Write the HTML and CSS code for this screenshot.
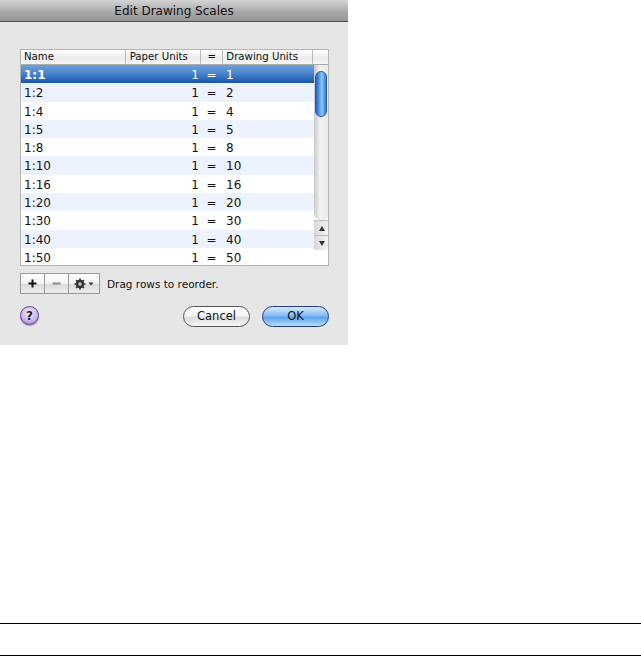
FILE: index.html
```html
<!DOCTYPE html>
<html lang="en">
<head>
<meta charset="utf-8">
<title>Edit Drawing Scales</title>
<link rel="stylesheet" href="styles.css">
</head>
<body>
<div class="dialog">
  <div class="titlebar">Edit Drawing Scales</div>
  <div class="content">
    <div class="table">
      <div class="thead">
        <div class="th c-name">Name</div>
        <div class="th c-paper">Paper Units</div>
        <div class="th c-eq">=</div>
        <div class="th c-draw">Drawing Units</div>
        <div class="th c-end"></div>
      </div>
      <div class="tbody">
        <div class="rows">
          <div class="row selected"><span class="c-name">1:1</span><span class="c-paper num">1</span><span class="c-eq">=</span><span class="c-draw">1</span></div>
          <div class="row alt"><span class="c-name">1:2</span><span class="c-paper num">1</span><span class="c-eq">=</span><span class="c-draw">2</span></div>
          <div class="row"><span class="c-name">1:4</span><span class="c-paper num">1</span><span class="c-eq">=</span><span class="c-draw">4</span></div>
          <div class="row alt"><span class="c-name">1:5</span><span class="c-paper num">1</span><span class="c-eq">=</span><span class="c-draw">5</span></div>
          <div class="row"><span class="c-name">1:8</span><span class="c-paper num">1</span><span class="c-eq">=</span><span class="c-draw">8</span></div>
          <div class="row alt"><span class="c-name">1:10</span><span class="c-paper num">1</span><span class="c-eq">=</span><span class="c-draw">10</span></div>
          <div class="row"><span class="c-name">1:16</span><span class="c-paper num">1</span><span class="c-eq">=</span><span class="c-draw">16</span></div>
          <div class="row alt"><span class="c-name">1:20</span><span class="c-paper num">1</span><span class="c-eq">=</span><span class="c-draw">20</span></div>
          <div class="row"><span class="c-name">1:30</span><span class="c-paper num">1</span><span class="c-eq">=</span><span class="c-draw">30</span></div>
          <div class="row alt"><span class="c-name">1:40</span><span class="c-paper num">1</span><span class="c-eq">=</span><span class="c-draw">40</span></div>
          <div class="row"><span class="c-name">1:50</span><span class="c-paper num">1</span><span class="c-eq">=</span><span class="c-draw">50</span></div>
        </div>
        <div class="scrollbar">
          <div class="track"><div class="thumb"></div></div>
          <div class="arrow"><svg width="8" height="7" viewBox="0 0 8 7"><path d="M4 1 L7 6 H1 Z" fill="#333"/></svg></div>
          <div class="arrow"><svg width="8" height="7" viewBox="0 0 8 7"><path d="M1 1 H7 L4 6 Z" fill="#333"/></svg></div>
        </div>
      </div>
    </div>
    <div class="toolbar">
      <div class="seg">
        <div class="seg-btn plus"><svg width="11" height="11" viewBox="0 0 11 11"><path d="M5.5 1.5 V9.5 M1.5 5.5 H9.5" stroke="#111" stroke-width="2"/></svg></div>
        <div class="seg-btn minus"><svg width="11" height="11" viewBox="0 0 11 11"><path d="M1.5 5.5 H9.5" stroke="#8a8a8a" stroke-width="2"/></svg></div>
        <div class="seg-btn gear">
          <svg width="12" height="12" viewBox="0 0 12 12"><circle cx="6" cy="6" r="3" fill="none" stroke="#333" stroke-width="2.4"/><path d="M6 .5 V11.5 M.5 6 H11.5 M2.1 2.1 L9.9 9.9 M9.9 2.1 L2.1 9.9" stroke="#333" stroke-width="1.7"/><circle cx="6" cy="6" r="1.7" fill="#cfcfcf"/></svg>
          <svg width="6" height="4" viewBox="0 0 6 4"><path d="M.5 .5 H5.5 L3 3.5 Z" fill="#333"/></svg>
        </div>
      </div>
      <span class="hint">Drag rows to reorder.</span>
    </div>
    <div class="actions">
      <div class="help">?</div>
      <div class="buttons">
        <div class="btn">Cancel</div>
        <div class="btn primary">OK</div>
      </div>
    </div>
  </div>
</div>
<div class="rule first"></div>
<div class="rule second"></div>
</body>
</html>
```
FILE: styles.css
```css
* { box-sizing: border-box; }
html, body { margin: 0; padding: 0; background: #fff; }
body { width: 641px; height: 656px; overflow: hidden; font-family: "DejaVu Sans", sans-serif; color: #111; }
.dialog { width: 348px; height: 345px; background: #e6e6e6; }
.titlebar {
  height: 22px; line-height: 22px; text-align: center; font-size: 12px; color: #111;
  background: linear-gradient(#d4d4d4, #a6a6a6 60%, #979797);
  border-bottom: 1px solid #4f4f4f;
}
.content { padding: 27px 19px 0 20px; }
.table { height: 217px; background: #fff; border: 1px solid #b5b5b5; overflow: hidden; }
.thead { display: flex; height: 15px; background: linear-gradient(#fff, #ececec 55%, #f6f6f6); border-bottom: 1px solid #a9a9a9; font-size: 10.2px; }
.th { line-height: 13px; padding-left: 3px; border-right: 1px solid #b9b9b9; color: #111; }
.th.c-paper { padding-left: 4px; }
.c-name { width: 105px; }
.c-paper { width: 76px; }
.c-eq { width: 22px; text-align: center; padding-left: 0; }
.c-draw { width: 90px; }
.c-end { width: 15px; border-right: 0; }
.tbody { display: flex; align-items: flex-start; }
.rows { width: 293px; flex: none; }
.row { display: flex; height: 18.3px; padding-top: 1px; line-height: 18px; font-size: 12px; background: #fff; }
.row .c-name { padding-left: 3px; }
.row .c-eq { padding-right: 3px; }
.row .c-draw { padding-left: 2px; }
.row.alt { background: #edf3fe; }
.row.selected { background: linear-gradient(#6ea0dc, #4a86cf 45%, #1655ab); color: #fff; font-weight: bold; }
.row.selected .num, .row.selected .c-eq, .row.selected .c-draw { font-weight: normal; }
.num { text-align: right; padding-right: 3px; }
.scrollbar { width: 15px; flex: none; display: flex; flex-direction: column; }
.track { height: 155px; padding: 6px 1px 0 1px; background: linear-gradient(90deg, #c8c8c8, #f2f2f2 40%, #e8e8e8); border-radius: 0 0 7px 7px; }
.thumb {
  width: 12px; height: 46px; border-radius: 6px; border: 1px solid #2a5da8;
  background: linear-gradient(90deg, #1f63c4, #6db0f0 45%, #8ec6f8 60%, #2f78d4);
}
.arrow { height: 15px; display: flex; align-items: center; justify-content: center; background: linear-gradient(90deg, #d8d8d8, #f5f5f5); border-top: 1px solid #bdbdbd; }
.toolbar { display: flex; align-items: center; margin-top: 7px; }
.seg { display: flex; height: 21px; width: 80px; border: 1px solid #9a9a9a; background: linear-gradient(#fff, #f3f3f3 50%, #dcdcdc 55%, #ececec); }
.seg-btn { display: flex; align-items: center; justify-content: center; gap: 2px; border-right: 1px solid #9a9a9a; }
.plus, .minus { width: 24px; }
.gear { flex: 1; border-right: 0; }
.hint { font-size: 10.5px; margin-left: 7px; color: #111; }
.actions { display: flex; align-items: flex-start; justify-content: space-between; margin-top: 12px; }
.help {
  width: 19px; height: 19px; border-radius: 50%; text-align: center; font-size: 12px; font-weight: bold; line-height: 18px; color: #1a1a2a;
  background: radial-gradient(circle at 50% 35%, #f6f0ff, #c9b0ee 60%, #7d55c0);
  border: 1px solid #5f4a8a; box-shadow: 0 1px 1px #999;
}
.buttons { display: flex; gap: 12px; }
.btn {
  width: 67px; height: 21px; line-height: 19px; text-align: center; font-size: 11.5px; border-radius: 10.5px;
  border: 1px solid #555; background: linear-gradient(#fff, #f4f4f4 45%, #dedede 55%, #f6f6f6); color: #111;
}
.btn.primary { border-color: #243d80; background: linear-gradient(#d6eafc, #86bcf2 45%, #5fa2ea 55%, #b6e0fb); }
.rule { height: 1px; background: #000; }
.rule.first { margin-top: 278px; }
.rule.second { margin-top: 31px; }
```
